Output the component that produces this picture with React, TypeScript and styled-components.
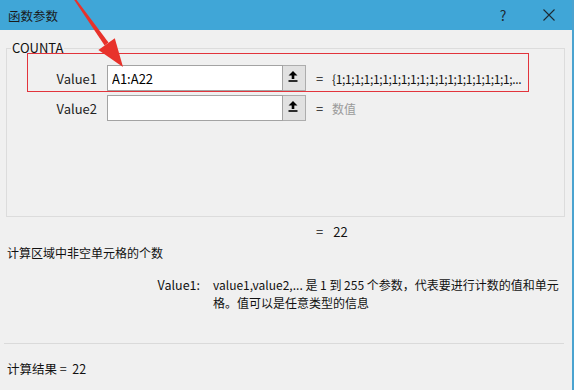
import React from 'react';
import styled, { createGlobalStyle } from 'styled-components';

const GlobalStyle = createGlobalStyle`
  body {
    margin: 0;
    background: #f0f0f0;
    font-family: "Noto Sans CJK SC", "Noto Sans", sans-serif;
  }
`;

const Window = styled.div`
  position: relative;
  width: 574px;
  height: 390px;
  box-sizing: border-box;
  background: #f0f0f0;
  border-right: 2px solid #4aa3d0;
  overflow: hidden;
  color: #111;
`;

const TitleBar = styled.div`
  display: flex;
  align-items: center;
  height: 30px;
  padding-left: 8px;
  background: #40a6d7;
  font-size: 12.5px;
  color: #1a1a1a;
`;

const TitleButtons = styled.div`
  display: flex;
  margin-left: auto;
  height: 100%;
`;

const TitleButton = styled.div`
  display: flex;
  align-items: center;
  justify-content: center;
  width: 46px;
  height: 100%;
  font-size: 14px;
  color: #1d2a33;
`;

const Body = styled.div`
  padding: 10px 8px 0 6px;
`;

const Group = styled.fieldset`
  box-sizing: border-box;
  width: 559px;
  margin: 0;
  padding: 0;
  border: 1px solid #dcdcdc;
`;

const Legend = styled.legend`
  margin-left: 4px;
  padding: 0 1px;
  font-size: 13px;
  line-height: 16px;
  color: #111;
`;

const Rows = styled.div`
  box-sizing: border-box;
  height: 160px;
  padding-top: 9px;
  display: flex;
  flex-direction: column;
  gap: 4px;
`;

const ParamRow = styled.div`
  display: grid;
  grid-template-columns: 100px 176px 23px 26px 1fr;
  align-items: center;
  height: 26px;
`;

const ParamLabel = styled.div`
  padding-right: 10px;
  text-align: right;
  font-size: 13px;
  color: #222;
`;

const ParamInput = styled.input`
  box-sizing: border-box;
  width: 176px;
  height: 26px;
  margin: 0;
  padding: 0 4px;
  border: 1px solid #a3a3a3;
  background: #fff;
  font-family: inherit;
  font-size: 13px;
  color: #000;
  outline: none;
`;

const RefButton = styled.div`
  box-sizing: border-box;
  display: flex;
  align-items: flex-start;
  width: 23px;
  height: 26px;
  padding: 5px 0 0 5px;
  background: #e1e1e1;
  border: 1px solid #adadad;
  border-left: none;
`;

const Equals = styled.div`
  padding-left: 10px;
  font-size: 13px;
`;

const ParamValue = styled.div<{ $hint?: boolean }>`
  font-size: 12px;
  color: ${p => (p.$hint ? '#9a9a9a' : '#111')};
  white-space: nowrap;
  overflow: hidden;
  letter-spacing: ${p => (p.$hint ? '0' : '-0.35px')};
`;

const Highlight = styled.div`
  position: absolute;
  left: 27px;
  top: 53px;
  width: 502px;
  height: 39px;
  box-sizing: border-box;
  border: 1px solid #e2343c;
  pointer-events: none;
`;

const ResultLine = styled.div`
  display: flex;
  gap: 10px;
  margin-top: 7px;
  padding-left: 310px;
  font-size: 13px;
  line-height: 16px;
`;

const Description = styled.div`
  margin-top: 5px;
  padding-left: 1px;
  font-size: 12px;
  line-height: 16px;
`;

const ArgHelp = styled.div`
  display: grid;
  grid-template-columns: 194px 354px;
  column-gap: 13px;
  margin-top: 15px;
  font-size: 12px;
  line-height: 18px;
`;

const ArgName = styled.div`
  text-align: right;
  font-size: 12.5px;
`;

const Separator = styled.div`
  width: 560px;
  margin: 31px 0 0 -2px;
  border-top: 1px solid #dadada;
`;

const Summary = styled.div`
  margin-top: 17px;
  padding-left: 1px;
  font-size: 12.5px;
  line-height: 16px;
`;

const Pointer = styled.svg`
  position: absolute;
  left: 60px;
  top: 0;
  pointer-events: none;
`;

const RefIcon = () => (
  <svg width="10" height="11" viewBox="0 0 10 11">
    <path d="M5 0 L9.5 4.5 H6.3 V8 H3.7 V4.5 H0.5 Z" fill="#000" />
    <rect x="0.5" y="9.2" width="9" height="1.6" fill="#000" />
  </svg>
);

const CloseIcon = () => (
  <svg width="12" height="12" viewBox="0 0 12 12">
    <path d="M0.5 0.5 L11.5 11.5 M11.5 0.5 L0.5 11.5" stroke="#1d2a33" strokeWidth="1.1" />
  </svg>
);

const params = [
  { name: 'Value1', input: 'A1:A22', value: '{1;1;1;1;1;1;1;1;1;1;1;1;1;1;1;1;1;1;1;...', hint: false },
  { name: 'Value2', input: '', value: '数值', hint: true },
];

export default function App() {
  return (
    <Window>
      <GlobalStyle />
      <TitleBar>
        函数参数
        <TitleButtons>
          <TitleButton>?</TitleButton>
          <TitleButton><CloseIcon /></TitleButton>
        </TitleButtons>
      </TitleBar>
      <Body>
        <Group>
          <Legend>COUNTA</Legend>
          <Rows>
            {params.map(p => (
              <ParamRow key={p.name}>
                <ParamLabel>{p.name}</ParamLabel>
                <ParamInput readOnly value={p.input} />
                <RefButton><RefIcon /></RefButton>
                <Equals>=</Equals>
                <ParamValue $hint={p.hint}>{p.value}</ParamValue>
              </ParamRow>
            ))}
          </Rows>
        </Group>
        <ResultLine>
          <span>=</span>
          <span>22</span>
        </ResultLine>
        <Description>计算区域中非空单元格的个数</Description>
        <ArgHelp>
          <ArgName>Value1:</ArgName>
          <div>value1,value2,... 是 1 到 255 个参数，代表要进行计数的值和单元格。值可以是任意类型的信息</div>
        </ArgHelp>
        <Separator />
        <Summary>计算结果 =&nbsp;&nbsp;22</Summary>
      </Body>
      <Highlight />
      <Pointer width="80" height="80" viewBox="0 0 80 80">
        <path d="M14.2 0 L16.6 0 L48.5 42.6 L44.6 45.4 Z" fill="#e8322b" />
        <path d="M63 67 L38.4 50 L54.8 38.2 Z" fill="#e8322b" />
      </Pointer>
    </Window>
  );
}
